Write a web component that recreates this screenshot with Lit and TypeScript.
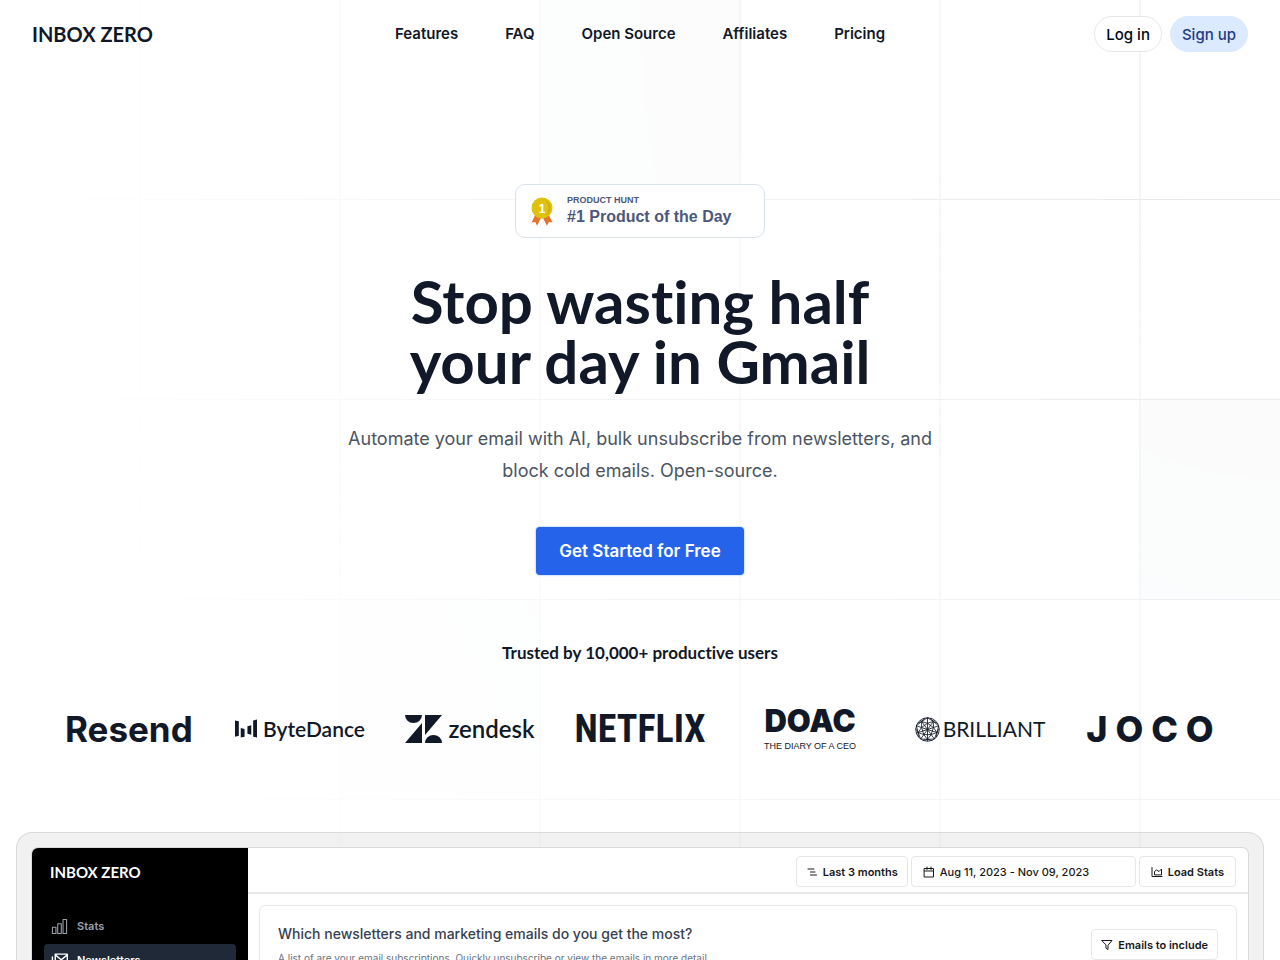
import { LitElement, html, svg, css } from "lit";
import { customElement } from "lit/decorators.js";

const NAV = ["Features", "FAQ", "Open Source", "Affiliates", "Pricing"];

const point = (r: number, deg: number) => {
  const a = (deg * Math.PI) / 180;
  return `${(12 + r * Math.sin(a)).toFixed(1)} ${(12 - r * Math.cos(a)).toFixed(1)}`;
};

/* Faceted sphere: a star in the middle, wired out to the rim. */
const facets = [0, 72, 144, 216, 288]
  .map(
    (a) =>
      `M12 12L${point(6, a)}L${point(11.3, a)}M${point(6, a)}L${point(6, a + 72)}` +
      `M${point(6, a)}L${point(9.5, a + 36)}L${point(6, a + 72)}M${point(9.5, a + 36)}L${point(11.3, a + 36)}` +
      `M${point(9.5, a + 36)}L${point(11.3, a + 14)}M${point(9.5, a + 36)}L${point(11.3, a + 58)}` +
      `M${point(11.3, a)}L${point(9.5, a + 36)}L${point(11.3, a + 72)}M12 12L${point(9.5, a + 36)}`
  )
  .join("");

const grid = html`
  <svg class="grid" aria-hidden="true">
    <defs>
      <pattern id="cells" width="200" height="200" x="50%" y="-1" patternUnits="userSpaceOnUse" patternTransform="translate(-100 0)">
        <path d="M0 0V200M200 0V200M0 .5H200" fill="none" />
      </pattern>
    </defs>
    <svg x="50%" y="-1" class="cells">
      <path d="M-100 0h201v201h-201Z M500 400h201v201h-201Z M-300 600h201v201h-201Z" stroke-width="0" />
    </svg>
    <rect width="100%" height="100%" stroke-width="0" fill="url(#cells)" />
  </svg>
`;

const medal = html`
  <svg class="medal" viewBox="0 0 22 29" aria-hidden="true">
    <path d="M4.500 17.500 0.500 25.500l3.600-.6 2 3.800 4.400-8.700zM17.500 17.500l4 8-3.600-.6-2 3.800L11.500 20z" fill="#e5752a" />
    <circle cx="11" cy="11" r="10.500" fill="#dfc10e" />
    <path d="M14.500 3.400a8.300 8.300 0 0 1 0 15.200 11 11 0 0 0 0-15.200z" fill="#cfae0c" />
    <text x="11" y="15.500" text-anchor="middle">1</text>
  </svg>
`;

const icon = (body: unknown, cls = "icon") =>
  html`<svg class=${cls} viewBox="0 0 24 24" aria-hidden="true">${body}</svg>`;

@customElement("app-root")
export class AppRoot extends LitElement {
  static styles = css`
    :host {
      display: block;
      font-family: Inter, "Noto Sans", sans-serif;
      color: #111827;
      background: #fff;
    }
    * {
      box-sizing: border-box;
    }
    a {
      color: inherit;
      text-decoration: none;
    }
    button {
      font-family: inherit;
      margin: 0;
    }
    .page {
      position: relative;
      z-index: 0;
      height: 100vh;
      overflow: hidden;
    }
    .grid {
      position: absolute;
      inset: 0;
      z-index: -1;
      width: 100%;
      height: 100%;
      stroke: #e5e7eb;
      -webkit-mask-image: radial-gradient(100% 1600px at top right, #fff, transparent);
      mask-image: radial-gradient(100% 1600px at top right, #fff, transparent);
    }
    .cells {
      overflow: visible;
      fill: #f9fafb;
    }
    .brand {
      font-family: Lato, sans-serif;
      font-weight: 700;
      font-size: 20px;
      line-height: 24px;
    }
    .top {
      display: flex;
      align-items: center;
      padding: 16px 32px;
    }
    .side {
      flex: 1;
      display: flex;
      gap: 8px;
    }
    .end {
      justify-content: flex-end;
    }
    .links {
      display: flex;
      gap: 47px;
      font-size: 15px;
      line-height: 24px;
      font-weight: 600;
    }
    .pill {
      height: 36px;
      padding: 0 11px;
      border: 1px solid #e5e7eb;
      border-radius: 18px;
      background: #fff;
      color: #020817;
      font-size: 15px;
      font-weight: 500;
    }
    .pill.blue {
      background: #dbeafe;
      border-color: #dbeafe;
      color: #1e3a8a;
    }
    .hero {
      display: flex;
      flex-direction: column;
      align-items: center;
      padding: 116px 24px 0;
      text-align: center;
    }
    .badge {
      display: flex;
      align-items: center;
      gap: 14px;
      width: 250px;
      height: 54px;
      padding: 0 15px;
      border: 1px solid #d9e1ec;
      border-radius: 10px;
      background: #fff;
      color: #4b587c;
      font-family: "Liberation Sans", sans-serif;
      font-weight: 700;
      text-align: left;
    }
    .medal {
      width: 22px;
      height: 29px;
    }
    .medal text {
      font-size: 12px;
      fill: #fff;
    }
    .small {
      display: block;
      font-size: 9px;
      line-height: 12px;
    }
    .big {
      display: block;
      font-size: 16px;
      line-height: 22px;
    }
    h1 {
      margin: 33px 0 0;
      font-family: Lato, sans-serif;
      font-weight: 700;
      font-size: 60px;
      line-height: 60px;
      font-variant-ligatures: none;
    }
    .lead {
      max-width: 592px;
      margin: 32px 0 0;
      font-size: 18px;
      line-height: 32px;
      color: #4b5563;
    }
    .cta {
      height: 48px;
      margin-top: 40px;
      padding: 0 23px;
      border: 0;
      border-radius: 4px;
      background: #2563eb;
      box-shadow: 0 0 2px #60a5fa;
      color: #fff;
      font-size: 17px;
      font-weight: 600;
    }
    h2 {
      margin: 64px 0 0;
      font-family: Lato, sans-serif;
      font-weight: 700;
      font-size: 17px;
      line-height: 28px;
      font-variant-ligatures: none;
    }
    .logos {
      display: grid;
      grid-template-columns: repeat(7, minmax(0, 130px));
      justify-content: center;
      gap: 40px;
      width: 100%;
      height: 50px;
      margin: 36px 0 0;
      padding: 0;
      list-style: none;
      align-items: center;
      white-space: nowrap;
    }
    .logo {
      display: flex;
      align-items: center;
      justify-content: center;
      gap: 6px;
      font-family: Lato, sans-serif;
      line-height: 40px;
    }
    .resend {
      justify-content: flex-start;
      font: 700 35px/40px Inter, sans-serif;
    }
    .byte {
      font-size: 21px;
      font-weight: 600;
    }
    .byte svg {
      width: 23px;
      height: 20px;
    }
    .zen {
      font-size: 24px;
      font-weight: 600;
    }
    .zen svg {
      width: 37px;
      height: 28px;
    }
    .netflix {
      font: 700 38px/40px "Roboto Condensed", "Open Sans Condensed", "Noto Sans Condensed", "Liberation Sans", sans-serif;
    }
    .doac {
      flex-direction: column;
      gap: 0;
      padding-top: 2px;
      font-family: Inter, sans-serif;
    }
    .doac b {
      font-weight: 900;
      font-size: 31px;
      line-height: 32px;
    }
    .doac small {
      font: 400 9px/18px "Liberation Sans", sans-serif;
    }
    .brilliant {
      gap: 3px;
      font-size: 21px;
    }
    .brilliant svg {
      width: 25px;
      height: 25px;
      flex: none;
      fill: none;
      stroke: #111827;
      stroke-width: 0.8;
    }
    .joco {
      font: 800 36px/40px Inter, sans-serif;
    }
    .frame {
      margin: 79px 16px 0;
      padding: 16px;
      border-radius: 16px;
      background: rgba(17, 24, 39, 0.06);
      box-shadow: inset 0 0 0 1px rgba(17, 24, 39, 0.1);
    }
    .app {
      display: grid;
      grid-template-columns: 216px 1fr;
      min-height: 640px;
      border-radius: 6px;
      overflow: hidden;
      background: #fff;
      box-shadow: 0 0 0 1px rgba(17, 24, 39, 0.1);
    }
    .menu {
      padding: 12px;
      background: #000;
      color: #fff;
    }
    .menu .brand {
      padding: 0 6px;
      font-size: 15px;
    }
    .items {
      display: grid;
      gap: 2px;
      margin-top: 26px;
    }
    .item {
      display: flex;
      align-items: center;
      gap: 9px;
      height: 32px;
      padding: 0 7px;
      border-radius: 4px;
      color: #9ca3af;
      font-size: 11px;
      font-weight: 600;
    }
    .item.on {
      background: #1f2937;
      color: #fff;
    }
    .icon {
      width: 12px;
      height: 12px;
      flex: none;
      fill: none;
      stroke: currentColor;
      stroke-width: 2;
      stroke-linecap: round;
      stroke-linejoin: round;
    }
    .icon.large {
      width: 17px;
      height: 17px;
      stroke-width: 1.500;
    }
    .bar {
      display: flex;
      justify-content: flex-end;
      gap: 3px;
      padding: 8px 12px 5px;
      border-bottom: 2px solid #e5e7eb;
    }
    .tool {
      display: flex;
      align-items: center;
      gap: 5px;
      height: 31px;
      padding: 0 9px;
      border: 1px solid #e5e7eb;
      border-radius: 4px;
      background: #fff;
      color: #18181b;
      font-size: 11px;
      font-weight: 600;
    }
    .tool.wide {
      padding: 0 11px;
    }
    .tool.date {
      width: 225px;
      font-weight: 500;
    }
    .card {
      display: flex;
      justify-content: space-between;
      align-items: flex-start;
      min-height: 500px;
      margin: 11px;
      padding: 18px;
      border: 1px solid #e5e7eb;
      border-radius: 6px;
    }
    h3 {
      margin: 0;
      font-size: 14px;
      line-height: 20px;
      font-weight: 500;
      color: #374151;
    }
    .card p {
      margin: 6px 0 0;
      font-size: 10px;
      line-height: 16px;
      color: #6b7280;
    }
    .card .tool {
      margin-top: 5px;
    }
  `;

  render() {
    return html`
      <div class="page">
        ${grid}
        <header class="top">
          <div class="side"><a class="brand" href="#">INBOX ZERO</a></div>
          <nav class="links">${NAV.map((n) => html`<a href="#">${n}</a>`)}</nav>
          <div class="side end">
            <button class="pill">Log in</button>
            <button class="pill blue">Sign up</button>
          </div>
        </header>

        <main>
          <section class="hero">
            <a class="badge" href="#">
              ${medal}
              <span><span class="small">PRODUCT HUNT</span><span class="big">#1 Product of the Day</span></span>
            </a>
            <h1>Stop wasting half<br />your day in Gmail</h1>
            <p class="lead">Automate your email with AI, bulk unsubscribe from newsletters, and block cold emails. Open-source.</p>
            <button class="cta">Get Started for Free</button>
            <h2>Trusted by 10,000+ productive users</h2>
            <ul class="logos">
              <li class="logo resend">Resend</li>
              <li class="logo byte">
                <svg viewBox="0 0 23 20" fill="#111827" aria-hidden="true">
                  <path d="M0 1l4 1v15l-4 1zM6 9l4 1v8l-4 1zM13 7l4-1v10l-4-1zM19 1l4-1v19l-4-1z" />
                </svg>
                <span>ByteDance</span>
              </li>
              <li class="logo zen">
                <svg viewBox="0 0 37 28" fill="#111827" aria-hidden="true">
                  <path d="M0 0h17a8.500 8 0 0 1-17 0zM17 8v20H0zM20 0h17L20 20zM20 28a8.500 8 0 0 1 17 0z" />
                </svg>
                <span>zendesk</span>
              </li>
              <li class="logo netflix">NETFLIX</li>
              <li class="logo doac"><b>DOAC</b><small>THE DIARY OF A CEO</small></li>
              <li class="logo brilliant">
                <svg viewBox="0 0 24 24" aria-hidden="true"><circle cx="12" cy="12" r="11.300" /><path d=${facets} /></svg>
                <span>BRILLIANT</span>
              </li>
              <li class="logo joco">J O C O</li>
            </ul>
          </section>

          <section class="frame">
            <div class="app">
              <aside class="menu">
                <div class="brand">INBOX ZERO</div>
                <nav class="items">
                  <a class="item" href="#">
                    ${icon(svg`<path d="M2 13h5v9H2zM9.500 8h5v14h-5zM17 2h5v20h-5z" />`, "icon large")}
                    Stats
                  </a>
                  <a class="item on" href="#">
                    ${icon(svg`<path d="M6 3h17v13H6zM6 4l8.500 7L23 4M2 7v13h17" stroke-width="2" />`, "icon large")}
                    Newsletters
                  </a>
                </nav>
              </aside>
              <div>
                <div class="bar">
                  <button class="tool">
                    ${icon(svg`<path d="M4 6h12M9 12h9M9 18h12" />`)} Last 3 months
                  </button>
                  <button class="tool wide date">
                    ${icon(svg`<path d="M3 5h18v17H3zM3 10h18M8 2v5M16 2v5" />`)} Aug 11, 2023 - Nov 09, 2023
                  </button>
                  <button class="tool wide">
                    ${icon(svg`<path d="M2 3v18h20M7 17v-6l4-3 5 3 5-5v11z" />`)} Load Stats
                  </button>
                </div>
                <div class="card">
                  <div>
                    <h3>Which newsletters and marketing emails do you get the most?</h3>
                    <p>A list of are your email subscriptions. Quickly unsubscribe or view the emails in more detail.</p>
                  </div>
                  <button class="tool">
                    ${icon(svg`<path d="M2 3h20l-8 9.500V21l-4-2.500v-6z" />`)} Emails to include
                  </button>
                </div>
              </div>
            </div>
          </section>
        </main>
      </div>
    `;
  }
}
